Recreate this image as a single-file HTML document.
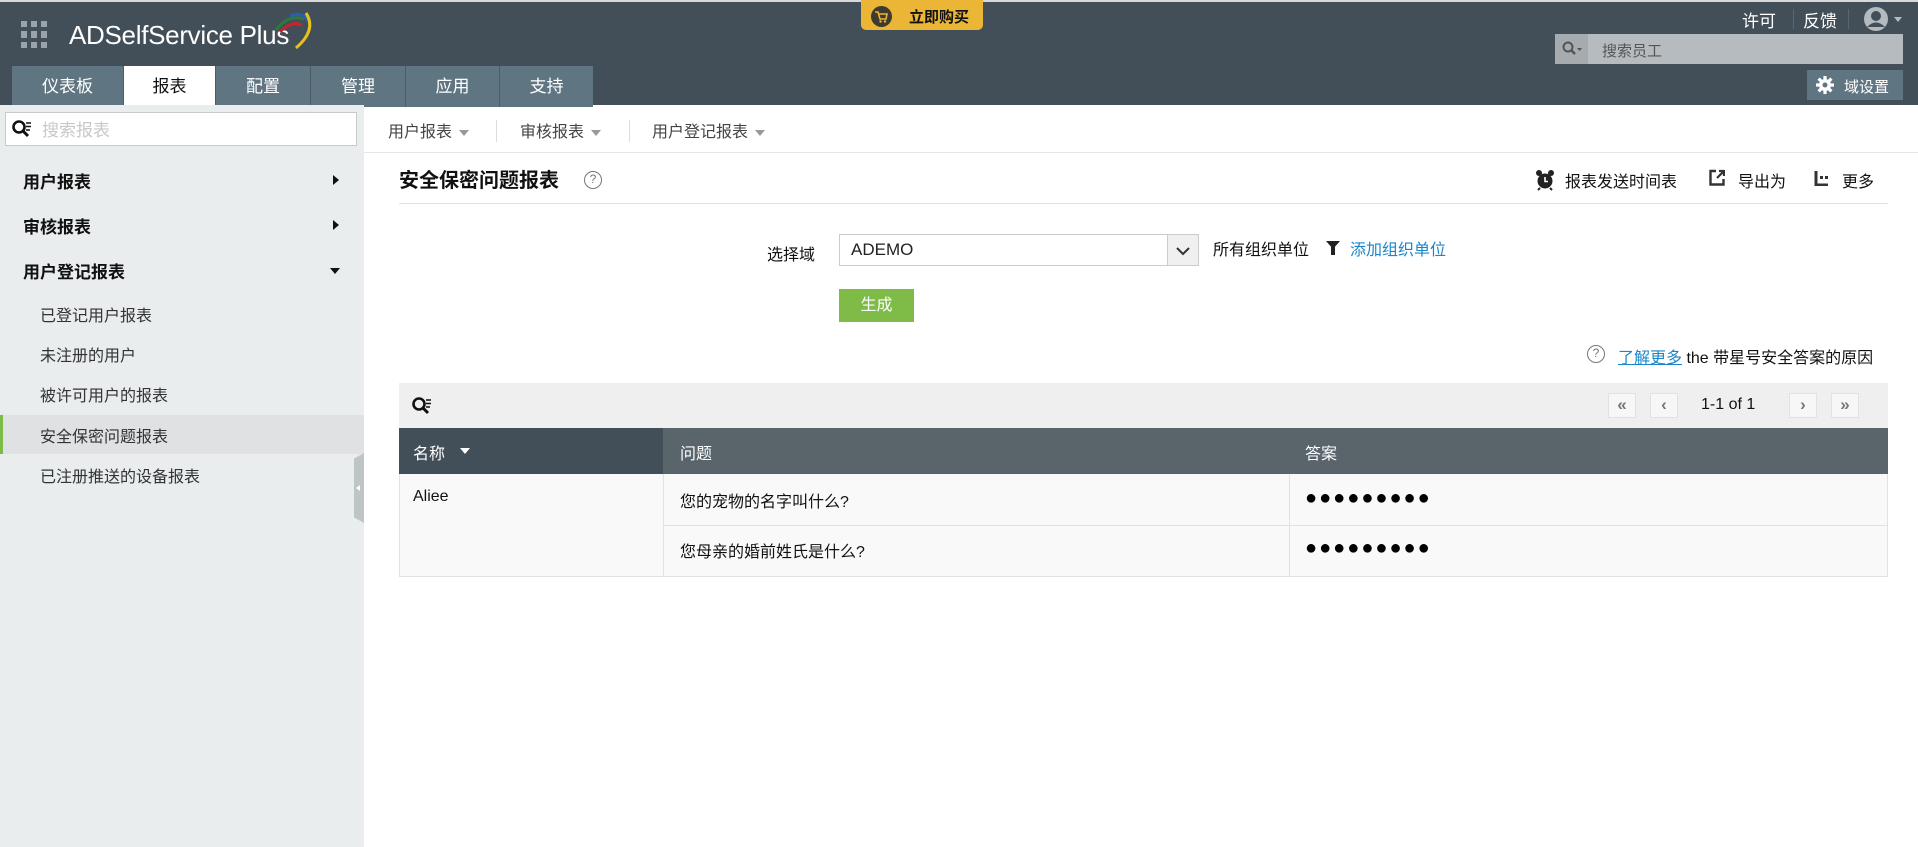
<!DOCTYPE html>
<html><head><meta charset="utf-8">
<style>
*{box-sizing:border-box;margin:0;padding:0}
body{width:1918px;height:847px;overflow:hidden;background:#fff;font-family:"Liberation Sans","Noto Sans CJK SC",sans-serif;font-size:16px;color:#222;position:relative}
.a{position:absolute;white-space:nowrap}
#hdr{left:0;top:0;width:1918px;height:105px;background:#434f58;border-top:2px solid #d9d9d9}
.tab{position:absolute;top:64px;height:41px;background:#607582;color:#fff;text-align:center;line-height:41px;font-size:17px;border-right:1px solid #4c5b65}
.tab.on{background:#fff;color:#111}
.sh{position:absolute;left:23px;font-weight:bold;font-size:17px;color:#111}
.si{position:absolute;left:40px;font-size:16px;color:#333}
.pb{position:absolute;top:393px;width:28px;height:25px;background:#f7f7f7;border:1px solid #e2e2e2;color:#777;font-weight:bold;text-align:center;line-height:22px;font-size:17px}
.dd{display:inline-block;width:0;height:0;border-left:5px solid transparent;border-right:5px solid transparent;border-top:6px solid #999;margin-left:7px;vertical-align:middle}
.dots{font-size:20px;letter-spacing:2px;color:#000}
</style></head><body>
<div id="hdr" class="a">
  <div class="a" style="left:21px;top:19px;width:27px;height:27px;display:grid;grid-template-columns:repeat(3,6px);gap:4px">
    <i style="background:#9aa3a9"></i><i style="background:#9aa3a9"></i><i style="background:#9aa3a9"></i><i style="background:#9aa3a9"></i><i style="background:#9aa3a9"></i><i style="background:#9aa3a9"></i><i style="background:#9aa3a9"></i><i style="background:#9aa3a9"></i><i style="background:#9aa3a9"></i>
  </div>
  <div class="a" style="left:69px;top:18px;color:#fff;font-size:26px;letter-spacing:-0.3px">ADSelfService Plus</div>
  <svg class="a" style="left:270px;top:6px" width="50" height="42" viewBox="0 0 50 42"><path d="M6 22 Q18 6 34 11" stroke="#2a7a3a" stroke-width="3" fill="none"/><path d="M10 24 Q22 12 32 17" stroke="#c8242b" stroke-width="3" fill="none"/><path d="M20 8 Q34 3 38 14" stroke="#2a5db0" stroke-width="3" fill="none"/><path d="M36 5 Q47 22 26 40" stroke="#e7c21a" stroke-width="3" fill="none"/></svg>
  <div class="a" style="left:861px;top:-2px;width:122px;height:30px;background:#ebb535;border-radius:0 0 5px 5px"></div>
  <div class="a" style="left:871px;top:4px;width:21px;height:21px;border-radius:50%;background:#3e3a30"></div>
  <svg class="a" style="left:875px;top:9px" width="13" height="12"><path d="M0 1 H3 L5 8 H11 L12 3 H4" stroke="#ebb535" stroke-width="1.6" fill="none"/><circle cx="5.5" cy="10.5" r="1.2" fill="#ebb535"/><circle cx="10" cy="10.5" r="1.2" fill="#ebb535"/></svg>
  <div class="a" style="left:909px;top:4px;font-size:15px;font-weight:bold;color:#111">立即购买</div>
  <div class="a" style="left:1742px;top:5px;color:#fff;font-size:17px">许可</div>
  <div class="a" style="left:1793px;top:7px;width:1px;height:20px;background:#5a666e"></div>
  <div class="a" style="left:1803px;top:5px;color:#fff;font-size:17px">反馈</div>
  <div class="a" style="left:1848px;top:7px;width:1px;height:20px;background:#5a666e"></div>
  <svg class="a" style="left:1864px;top:4px" width="46" height="26" viewBox="0 0 46 26"><circle cx="12" cy="13" r="12" fill="#b3bac0"/><circle cx="12" cy="10" r="5" fill="#434f58"/><path d="M3 21 Q12 12 21 21" fill="#434f58"/><path d="M30 11 L38 11 L34 16Z" fill="#b3bac0"/></svg>
  <div class="a" style="left:1555px;top:32px;width:348px;height:30px;background:#b6bbbf"></div>
  <div class="a" style="left:1555px;top:32px;width:33px;height:30px;background:#a5abaf"></div>
  <svg class="a" style="left:1562px;top:39px" width="22" height="16"><circle cx="6" cy="6" r="4.5" stroke="#555" stroke-width="2" fill="none"/><path d="M9 9 L13 13" stroke="#555" stroke-width="2.5"/><path d="M15 7 L20 7 L17.5 10Z" fill="#555"/></svg>
  <div class="a" style="left:1602px;top:38px;font-size:15px;color:#555">搜索员工</div>
  <div class="a" style="left:1807px;top:68px;width:96px;height:30px;background:#607582"></div>
  <svg class="a" style="left:1815px;top:73px" width="20" height="20" viewBox="0 0 20 20"><circle cx="10" cy="10" r="6" fill="#fff"/><g stroke="#fff" stroke-width="3.2"><path d="M10 1V19M1 10H19M3.6 3.6L16.4 16.4M16.4 3.6L3.6 16.4"/></g><circle cx="10" cy="10" r="2.5" fill="#607582"/></svg>
  <div class="a" style="left:1844px;top:74px;color:#fff;font-size:15px">域设置</div>
  <div class="tab" style="left:12px;width:112px">仪表板</div>
  <div class="tab on" style="left:124px;width:92px">报表</div>
  <div class="tab" style="left:216px;width:95px">配置</div>
  <div class="tab" style="left:311px;width:95px">管理</div>
  <div class="tab" style="left:406px;width:94px">应用</div>
  <div class="tab" style="left:500px;width:93px;border-right:none">支持</div>
</div>

<div class="a" style="left:0;top:105px;width:364px;height:742px;background:#e9edee"></div>
<div class="a" style="left:5px;top:112px;height:34px;background:#fff;border:1px solid #c9c9c9;width:352px"></div>
<svg class="a" style="left:11px;top:119px" width="22" height="20"><circle cx="8" cy="8" r="5.5" stroke="#111" stroke-width="2.6" fill="none"/><path d="M12 12 L17 17" stroke="#111" stroke-width="3"/><path d="M15 4H20M15 7.5H20M15 11H19" stroke="#111" stroke-width="1.4"/></svg>
<div class="a" style="left:42px;top:116px;font-size:17px;color:#c8c8c8">搜索报表</div>
<div class="sh" style="top:168px">用户报表</div>
<div class="a" style="left:333px;top:175px;border-top:5px solid transparent;border-bottom:5px solid transparent;border-left:6px solid #111"></div>
<div class="sh" style="top:213px">审核报表</div>
<div class="a" style="left:333px;top:220px;border-top:5px solid transparent;border-bottom:5px solid transparent;border-left:6px solid #111"></div>
<div class="sh" style="top:258px">用户登记报表</div>
<div class="a" style="left:330px;top:268px;border-left:5px solid transparent;border-right:5px solid transparent;border-top:6px solid #111"></div>
<div class="si" style="top:302px">已登记用户报表</div>
<div class="si" style="top:342px">未注册的用户</div>
<div class="si" style="top:382px">被许可用户的报表</div>
<div class="a" style="left:0;top:415px;width:364px;height:39px;background:#dfe1e3;border-left:3px solid #7cbd4a"></div>
<div class="si" style="top:423px">安全保密问题报表</div>
<div class="si" style="top:463px">已注册推送的设备报表</div>
<div class="a" style="left:354px;top:453px;width:10px;height:70px;background:#bfc4c7;clip-path:polygon(100% 0,100% 100%,0 92%,0 8%)"></div>
<div class="a" style="left:356px;top:485px;border-top:3px solid transparent;border-bottom:3px solid transparent;border-right:4px solid #fff"></div>

<div class="a" style="left:364px;top:152px;width:1554px;height:1px;background:#e3e6e8"></div>
<div class="a" style="left:388px;top:118px;font-size:16px;color:#444">用户报表<span class="dd"></span></div>
<div class="a" style="left:496px;top:120px;width:1px;height:22px;background:#dcdcdc"></div>
<div class="a" style="left:520px;top:118px;font-size:16px;color:#444">审核报表<span class="dd"></span></div>
<div class="a" style="left:629px;top:120px;width:1px;height:22px;background:#dcdcdc"></div>
<div class="a" style="left:652px;top:118px;font-size:16px;color:#444">用户登记报表<span class="dd"></span></div>

<div class="a" style="left:399px;top:164px;font-size:20px;font-weight:bold;color:#111">安全保密问题报表</div>
<div class="a" style="left:584px;top:171px;width:18px;height:18px;border:1.5px solid #777;border-radius:50%;font-size:12px;color:#777;text-align:center;line-height:15px">?</div>
<div class="a" style="left:399px;top:203px;width:1489px;height:1px;background:#dfe2e4"></div>
<svg class="a" style="left:1535px;top:169px" width="20" height="22" viewBox="0 0 20 22"><circle cx="10" cy="12" r="7.5" fill="#222"/><circle cx="4" cy="4" r="3" fill="#222"/><circle cx="16" cy="4" r="3" fill="#222"/><path d="M10 8V12.5H13" stroke="#fff" stroke-width="1.6" fill="none"/><path d="M5 19L3 21M15 19L17 21" stroke="#222" stroke-width="2"/></svg>
<div class="a" style="left:1565px;top:168px;font-size:16px;color:#111">报表发送时间表</div>
<svg class="a" style="left:1709px;top:169px" width="16" height="17"><path d="M7 2H1.5V15.5H14.5V10" stroke="#333" stroke-width="2.4" fill="none"/><path d="M8 9L14 3M10 2H15V7" stroke="#333" stroke-width="2.2" fill="none"/></svg>
<div class="a" style="left:1738px;top:168px;font-size:16px;color:#111">导出为</div>
<svg class="a" style="left:1814px;top:170px" width="16" height="16"><path d="M2 1V15H14" stroke="#333" stroke-width="3" fill="none"/><rect x="6" y="6" width="3" height="3" fill="#333"/><rect x="11" y="6" width="3" height="3" fill="#333"/></svg>
<div class="a" style="left:1842px;top:168px;font-size:16px;color:#111">更多</div>

<div class="a" style="left:767px;top:241px;font-size:16px;color:#111">选择域</div>
<div class="a" style="left:839px;top:234px;width:360px;height:32px;border:1px solid #ccc;background:#fff"></div>
<div class="a" style="left:1167px;top:235px;width:31px;height:30px;background:#f0f0f0;border-left:1px solid #ccc"></div>
<svg class="a" style="left:1176px;top:246px" width="14" height="10"><path d="M1 2L7 8L13 2" stroke="#333" stroke-width="2" fill="none"/></svg>
<div class="a" style="left:851px;top:240px;font-size:17px;color:#222">ADEMO</div>
<div class="a" style="left:1213px;top:236px;font-size:16px;color:#111">所有组织单位</div>
<div class="a" style="left:1326px;top:241px;border-left:7px solid transparent;border-right:7px solid transparent;border-top:8px solid #222"></div>
<div class="a" style="left:1331px;top:247px;width:4px;height:8px;background:#222"></div>
<div class="a" style="left:1350px;top:236px;font-size:16px;color:#1a86c8">添加组织单位</div>
<div class="a" style="left:839px;top:289px;width:75px;height:33px;background:#7fbb47;color:#fff;text-align:center;line-height:33px;font-size:16px">生成</div>

<div class="a" style="left:1587px;top:345px;width:18px;height:18px;border:1.5px solid #777;border-radius:50%;font-size:12px;color:#777;text-align:center;line-height:15px">?</div>
<div class="a" style="left:1618px;top:344px;font-size:16px;color:#111"><span style="color:#1a86c8;text-decoration:underline">了解更多</span> the 带星号安全答案的原因</div>

<div class="a" style="left:399px;top:383px;width:1489px;height:45px;background:#efefef"></div>
<svg class="a" style="left:411px;top:396px" width="22" height="20"><circle cx="8" cy="8" r="5.5" stroke="#111" stroke-width="2.6" fill="none"/><path d="M12 12 L17 17" stroke="#111" stroke-width="3"/><path d="M15 4H20M15 7.5H20M15 11H19" stroke="#111" stroke-width="1.4"/></svg>
<div class="pb" style="left:1608px">«</div>
<div class="pb" style="left:1650px">‹</div>
<div class="a" style="left:1701px;top:396px;font-size:16px;color:#111">1-1 of 1</div>
<div class="pb" style="left:1789px">›</div>
<div class="pb" style="left:1831px">»</div>

<div class="a" style="left:399px;top:428px;width:264px;height:46px;background:#434f58"></div>
<div class="a" style="left:663px;top:428px;width:1225px;height:46px;background:#59646b"></div>
<div class="a" style="left:413px;top:440px;font-size:16px;color:#fff">名称</div>
<div class="a" style="left:460px;top:448px;border-left:5px solid transparent;border-right:5px solid transparent;border-top:6px solid #fff"></div>
<div class="a" style="left:680px;top:440px;font-size:16px;color:#fff">问题</div>
<div class="a" style="left:1305px;top:440px;font-size:16px;color:#fff">答案</div>

<div class="a" style="left:399px;top:474px;width:1489px;height:103px;background:#f9f9f9;border:1px solid #e2e2e2;border-top:none"></div>
<div class="a" style="left:663px;top:474px;width:1px;height:103px;background:#e2e2e2"></div>
<div class="a" style="left:1289px;top:474px;width:1px;height:103px;background:#e2e2e2"></div>
<div class="a" style="left:663px;top:525px;width:1225px;height:1px;background:#e2e2e2"></div>
<div class="a" style="left:413px;top:488px;font-size:16px;color:#111">Aliee</div>
<div class="a" style="left:680px;top:488px;font-size:16px;color:#111">您的宠物的名字叫什么?</div>
<div class="a" style="left:680px;top:538px;font-size:16px;color:#111">您母亲的婚前姓氏是什么?</div>
<div class="a dots" style="left:1305px;top:487px">●●●●●●●●●</div>
<div class="a dots" style="left:1305px;top:537px">●●●●●●●●●</div>
</body></html>
